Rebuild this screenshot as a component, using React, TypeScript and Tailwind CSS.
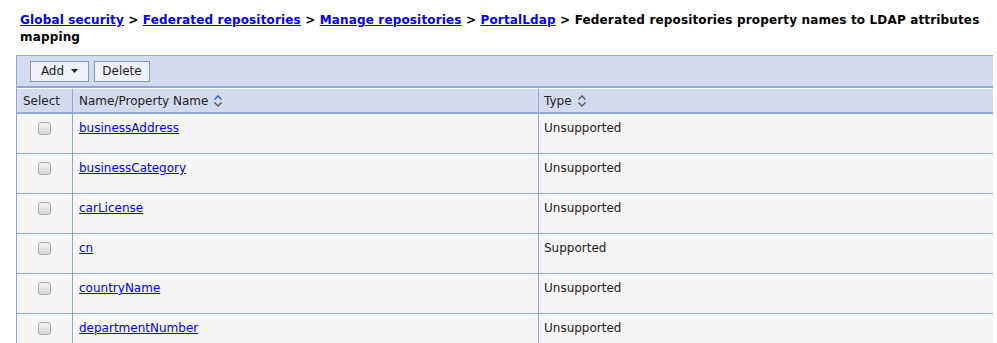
import React from "react";

const rows = [
  { name: "businessAddress", type: "Unsupported" },
  { name: "businessCategory", type: "Unsupported" },
  { name: "carLicense", type: "Unsupported" },
  { name: "cn", type: "Supported" },
  { name: "countryName", type: "Unsupported" },
  { name: "departmentNumber", type: "Unsupported" },
];

function SortIcon({ active }: { active?: boolean }) {
  return (
    <svg width="10" height="14" viewBox="0 0 10 14" className="inline-block ml-[5px] align-[-2px]">
      <path d="M1.5 5.5 L5 2 L8.5 5.5" fill="none" stroke={active ? "#2a5db0" : "#555"} strokeWidth="1.4" />
      <path d="M1.5 8.5 L5 12 L8.5 8.5" fill="none" stroke="#555" strokeWidth="1.4" />
    </svg>
  );
}

function Checkbox() {
  return (
    <div className="w-[13px] h-[13px] rounded-[3px] border border-[#a9a9a9] bg-gradient-to-b from-[#f2f2f2] to-[#d8d8d8]" />
  );
}

export default function App() {
  return (
    <div
      className="w-[997px] h-[343px] bg-white overflow-hidden text-[12px] text-[#222]"
      style={{ fontFamily: "Verdana, 'DejaVu Sans', sans-serif" }}
    >
      <div className="pl-[20px] pr-[14px] pt-[12px] text-[12px] font-bold leading-[17px] tracking-[0.15px] text-black">
        <a className="text-[#0000ee] underline" href="#">Global security</a>
        {" > "}
        <a className="text-[#0000ee] underline" href="#">Federated repositories</a>
        {" > "}
        <a className="text-[#0000ee] underline" href="#">Manage repositories</a>
        {" > "}
        <a className="text-[#0000ee] underline" href="#">PortalLdap</a>
        {" > Federated repositories property names to LDAP attributes mapping"}
      </div>

      <div className="ml-[16px] mt-[9px] w-[977px] border-l border-t border-[#8fa8d8]">
        <div className="h-[32px] bg-[#d5dbee] border-b-2 border-[#8fa8d8] flex items-center pl-[13px] gap-[5px]">
          <button className="h-[21px] w-[59px] border border-[#7d97c4] bg-[#eef1fa] flex items-center justify-center gap-[7px] text-[12px] text-[#222]">
            <span>Add</span>
            <svg width="7" height="4" viewBox="0 0 7 4"><path d="M0 0 L7 0 L3.5 4 Z" fill="#222" /></svg>
          </button>
          <button className="h-[21px] w-[56px] border border-[#7d97c4] bg-[#eef1fa] flex items-center justify-center text-[12px] text-[#222]">
            Delete
          </button>
        </div>
        <div className="h-px bg-white" />
        <div className="grid grid-cols-[56px_466px_1fr] h-[25px] bg-[#d5dbee] border-b-2 border-[#8fa8d8] text-[#222]">
          <div className="pl-[6px] border-r border-[#8fa8d8] flex items-center">Select</div>
          <div className="pl-[6px] border-r border-[#8fa8d8] flex items-center">
            Name/Property Name
            <SortIcon active />
          </div>
          <div className="pl-[5px] flex items-center">
            Type
            <SortIcon />
          </div>
        </div>
        {rows.map((r) => (
          <div key={r.name} className="grid grid-cols-[56px_466px_1fr] h-[40px] bg-[#f5f5f5] border-b border-[#8fa8d8]">
            <div className="border-r border-[#8fa8d8] flex justify-center pt-[8px] pr-[1px]">
              <Checkbox />
            </div>
            <div className="border-r border-[#8fa8d8] pl-[6px] pt-[5px]">
              <a className="text-[#0000ee] underline" href="#">{r.name}</a>
            </div>
            <div className="pl-[5px] pt-[5px] text-[#222]">{r.type}</div>
          </div>
        ))}
      </div>
    </div>
  );
}
